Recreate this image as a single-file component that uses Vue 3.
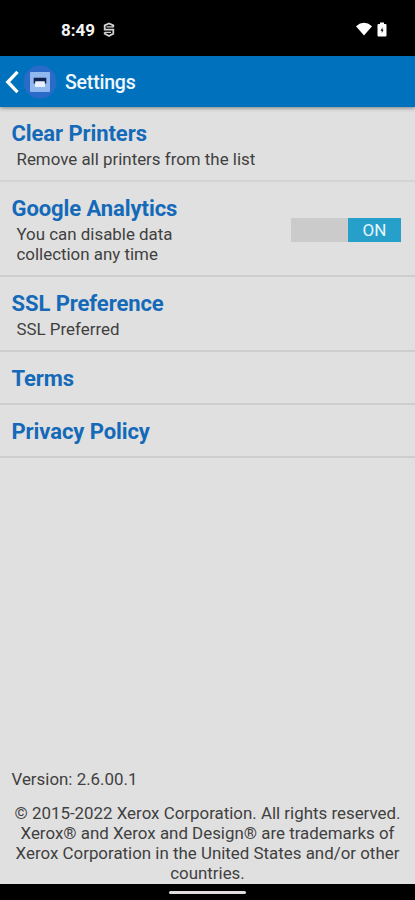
<script setup>
const rows = [
  { title: 'Clear Printers', lines: ['Remove all printers from the list'] },
  { title: 'Google Analytics', lines: ['You can disable data', 'collection any time'], toggle: true },
  { title: 'SSL Preference', lines: ['SSL Preferred'] },
  { title: 'Terms', lines: [] },
  { title: 'Privacy Policy', lines: [] },
]
const legal = [
  '© 2015-2022 Xerox Corporation. All rights reserved.',
  'Xerox® and Xerox and Design® are trademarks of',
  'Xerox Corporation in the United States and/or other',
  'countries.',
]
</script>

<template>
  <div class="screen">
    <div class="status">
      <span class="time">8:49</span>
      <svg class="badge" width="12" height="16" viewBox="0 0 12 16" fill="none" stroke="#d2d2d2" stroke-width="1.8">
        <path d="M10.3 5.2V3.3L6 1.5 1.7 3.3V7.7H10.3V11.6L6 14 1.7 11.6V10.2" />
        <path d="M3.5 4.9H10.3M1.7 10.4H8" stroke-width="1.2" />
      </svg>
      <svg class="wifi" width="18" height="14" viewBox="0 0 18 14" fill="#fff">
        <path d="M1 4.2Q9-2.6 17 4.2L9 13.6Z" />
      </svg>
      <svg class="battery" width="10" height="15" viewBox="0 0 10 15">
        <path d="M3 0.5H7V2H8.4Q9.5 2 9.5 3V13.4Q9.5 14.5 8.4 14.5H1.6Q.5 14.5.5 13.4V3Q.5 2 1.6 2H3Z" fill="#fff" />
        <path d="M5.5 5.3L3.5 8.7H4.8V10.9L6.6 7.7H5.5Z" fill="#111" />
      </svg>
    </div>
    <header class="bar">
      <svg class="back" width="15" height="24" viewBox="0 0 15 24" fill="none" stroke="#fff" stroke-width="3.3">
        <path d="M12.5 1.8L2.8 12 12.5 22.2" />
      </svg>
      <svg class="logo" width="34" height="34" viewBox="0 0 34 34">
        <circle cx="17" cy="17" r="16.5" fill="#2a6ac8" />
        <rect x="7" y="7" width="20" height="20" rx="1" fill="#90b8ef" />
        <path d="M12 16H22V22H12Z" fill="#e9effc" />
        <path d="M10.7 12.7H23.3V18.5H21.8V16.2H12.2V18.5H10.7Z" fill="#10234f" />
      </svg>
      <h1>Settings</h1>
    </header>
    <main>
      <section v-for="row in rows" :key="row.title" class="row">
        <div class="label">
          <h2>{{ row.title }}</h2>
          <p v-for="line in row.lines" :key="line">{{ line }}</p>
        </div>
        <div v-if="row.toggle" class="toggle"><span>ON</span></div>
      </section>
    </main>
    <footer>
      <div class="version">Version: 2.6.00.1</div>
      <div class="legal">
        <div v-for="line in legal" :key="line">{{ line }}</div>
      </div>
    </footer>
    <div class="nav"><i></i></div>
  </div>
</template>

<style>
body { margin: 0; }
</style>
<style scoped>
.screen { width: 415px; height: 900px; display: flex; flex-direction: column; overflow: hidden; background: #e0e0e0; font-family: Roboto, "Liberation Sans", sans-serif; color: #404040; white-space: nowrap; }
.status { height: 56px; flex: none; box-sizing: border-box; background: #000; display: flex; align-items: center; padding: 3px 28px 0 61px; }
.time { width: 36px; color: #f4f4f4; font-size: 17px; font-weight: 700; line-height: 20px; }
.badge { margin-left: 6px; }
.wifi { margin-left: auto; margin-top: -1px; }
.battery { margin-left: 4px; margin-top: -1px; }
.bar { height: 51px; flex: none; background: #0071bd; display: flex; align-items: center; padding-left: 5px; box-shadow: 0 1px 4px rgba(0, 0, 0, .45); position: relative; }
.logo { margin-left: 1px; }
.back { margin-right: 2px; }
h1 { margin: 3px 0 0 8px; color: #f0f7fc; font-size: 19.5px; font-weight: 500; line-height: 24px; letter-spacing: -0.2px; }
.row { box-sizing: border-box; border-bottom: 2px solid #cecece; padding: 13px 14px 10px 12px; display: flex; justify-content: space-between; align-items: center; }
.row:first-child { border-color: #d4d4d4; }
h2 { margin: 0 0 0 -0.5px; color: #146ab8; font-size: 22px; font-weight: 700; line-height: 28px; letter-spacing: -0.08px; }
p { margin: 0 0 0 4.5px; font-size: 16.9px; line-height: 20px; }
.row p:nth-of-type(1) { margin-top: 1px; }
.row p:last-child { padding-bottom: 1px; }
.toggle { width: 110px; height: 24px; background: #cbcbcb; display: flex; justify-content: flex-end; }
.toggle span { width: 53px; background: #26a0cb; color: #e8f6fb; font-size: 17px; line-height: 25px; text-align: center; }
footer { margin-top: auto; flex: none; font-size: 16.9px; line-height: 20px; padding-bottom: 1px; }
.version { margin: 0 0 14px 11.5px; }
.legal { text-align: center; }
.nav { height: 16px; flex: none; background: #000; display: flex; justify-content: center; align-items: center; }
.nav i { width: 77px; height: 3px; border-radius: 2px; background: #e0dce0; }
</style>
